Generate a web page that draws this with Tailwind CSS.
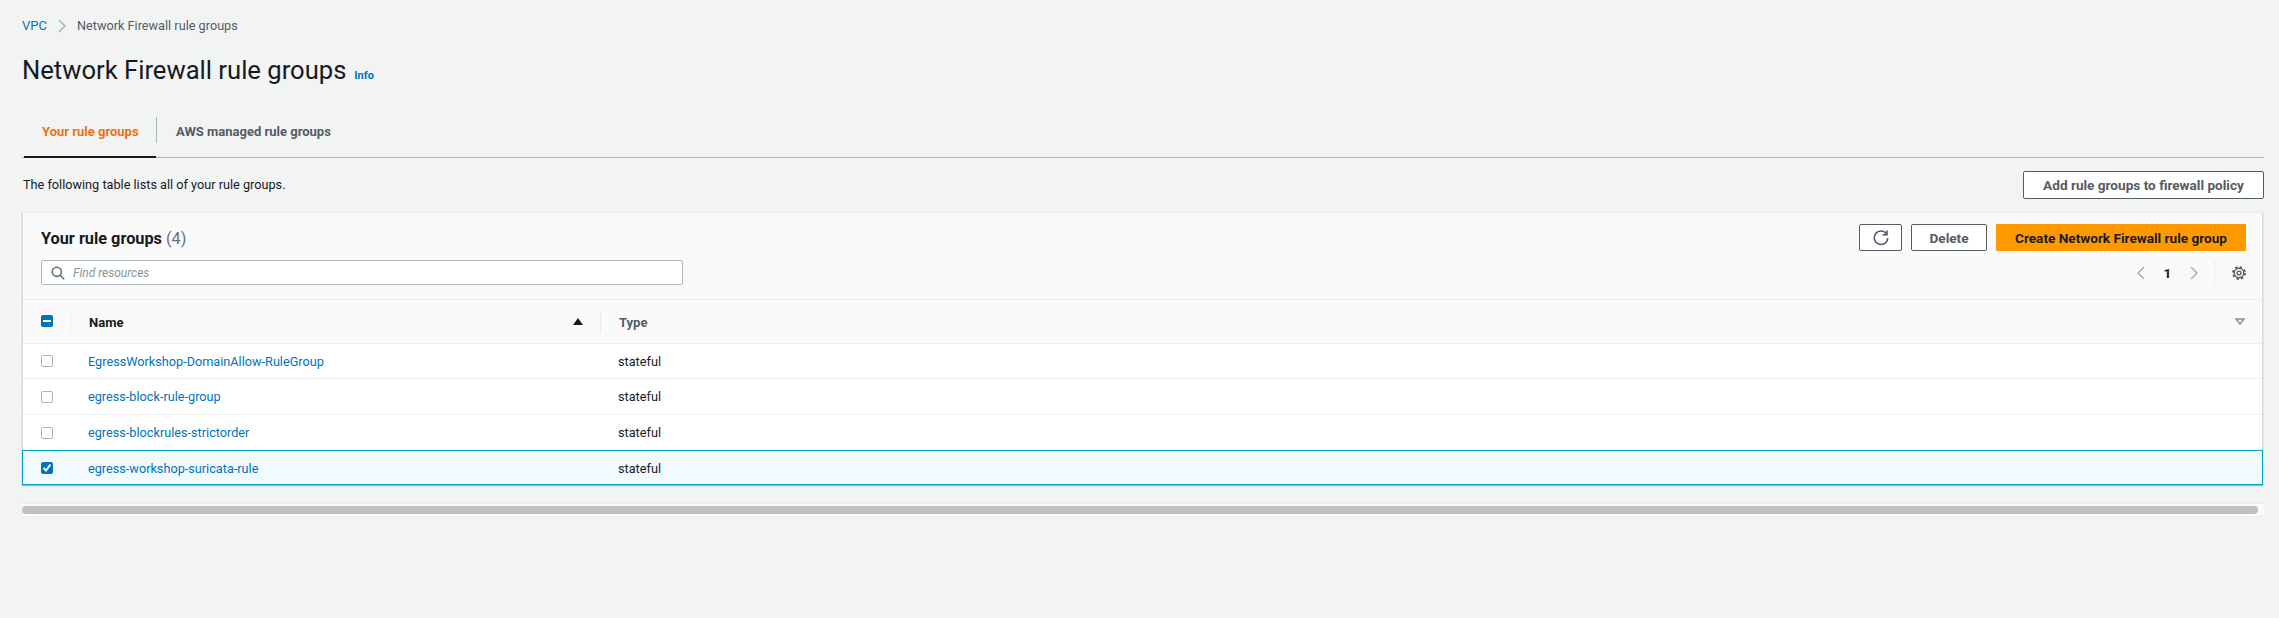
<!doctype html>
<html lang="en">
<head>
  <meta charset="UTF-8" />
  <script src="https://cdn.jsdelivr.net/npm/@tailwindcss/browser@4"></script>
  <title>Network Firewall rule groups</title>
</head>
<body class="h-[618px] w-[2279px] overflow-hidden bg-[#f2f3f3] pl-[22px] pr-[15px] font-['Roboto',sans-serif] text-[12.7px] leading-[18px] text-[#16191f]">
  <!-- Breadcrumb -->
  <nav class="flex h-[17px] items-center mt-[17px]">
    <a class="text-[#0073bb] text-[13px] w-[35px]">VPC</a>
    <svg class="w-[10px] h-[14px] text-[#aab7b8]" viewBox="0 0 10 14" fill="none" stroke="currentColor" stroke-width="1.6"><path d="M2 1l6 6-6 6"/></svg>
    <span class="ml-[10px] text-[#545b64]">Network Firewall rule groups</span>
  </nav>

  <header class="flex items-baseline mt-[17px] h-[38px]">
    <h1 class="text-[25.6px] leading-[38px] font-normal">Network Firewall rule groups</h1>
    <a class="ml-[8px] text-[11px] font-bold text-[#0073bb]">Info</a>
  </header>

  <!-- Tabs -->
  <div class="flex mt-[21px] h-[48px] border-b border-[#aab7b8]">
    <div class="relative flex w-[134px] items-center pl-[20px] pb-[3px] text-[13px] font-bold text-[#ec7211]">
      Your rule groups
      <div class="absolute left-[2px] right-0 bottom-[-1px] h-[2px] bg-[#16191f]"></div>
    </div>
    <div class="mt-[7px] h-[26px] w-px bg-[#aab7b8]"></div>
    <div class="flex items-center pl-[19px] pb-[3px] font-bold text-[13px] text-[#545b64]">AWS managed rule groups</div>
  </div>

  <div class="flex items-center justify-between mt-[13px] h-[28px]">
    <p class="pl-px">The following table lists all of your rule groups.</p>
    <button class="h-[28px] w-[241px] rounded-[2px] border border-[#545b64] bg-white text-[13.6px] font-bold text-[#545b64]">Add rule groups to firewall policy</button>
  </div>

  <!-- Table card -->
  <section class="mt-[13px] w-[2241px] border-l border-r border-[#d5dbdb] bg-white shadow-[0_1px_1px_0_rgba(0,28,36,0.3)]">
    <div class="h-[88px] border-t border-b border-[#eaeded] bg-[#fafafa] pl-[18px] pr-[16px]">
      <div class="flex items-start justify-between pt-[11px]">
        <h2 class="mt-[5px] text-[16.3px] leading-[20px] font-bold">Your rule groups <span class="font-normal text-[#687078]">(4)</span></h2>
        <div class="flex gap-[9px]">
          <button class="flex h-[27px] w-[43px] items-center justify-center rounded-[2px] border border-[#545b64] bg-white text-[#545b64]">
            <svg class="w-[16px] h-[16px]" viewBox="0 0 16 16" fill="none" stroke="currentColor" stroke-width="1.6"><path d="M13.4 3.800A6.700 6.700 0 1 0 14.700 8"/><path d="M9.500 4.800h4.500V.5"/></svg>
          </button>
          <button class="h-[27px] w-[76px] rounded-[2px] border border-[#545b64] bg-white text-[13.6px] font-bold text-[#545b64]">Delete</button>
          <button class="h-[27px] w-[250px] rounded-[1px] bg-[#ff9900] text-[13.6px] font-bold text-[#16191f]">Create Network Firewall rule group</button>
        </div>
      </div>
      <div class="flex items-start justify-between mt-[9px]">
        <div class="flex h-[25px] w-[642px] items-center rounded-[2px] border border-[#aab7b8] bg-white pl-[9px]">
          <svg class="w-[14px] h-[14px] text-[#687078]" viewBox="0 0 14 14" fill="none" stroke="currentColor" stroke-width="1.6"><circle cx="5.8" cy="5.8" r="4.6"/><path d="M9.2 9.2l4 4"/></svg>
          <span class="ml-[8px] text-[12px] italic text-[#879596]">Find resources</span>
        </div>
        <div class="flex h-[26px] items-center text-[#aab7b8]">
          <svg class="w-[10px] h-[14px]" viewBox="0 0 10 14" fill="none" stroke="currentColor" stroke-width="1.6"><path d="M8 1L2 7l6 6"/></svg>
          <span class="w-[43px] text-center text-[13.6px] font-bold text-[#16191f]">1</span>
          <svg class="w-[10px] h-[14px]" viewBox="0 0 10 14" fill="none" stroke="currentColor" stroke-width="1.6"><path d="M2 1l6 6-6 6"/></svg>
          <div class="ml-[15px] h-[26px] w-px bg-[#eaeded]"></div>
          <svg class="ml-[17px] w-[14px] h-[14px] text-[#545b64]" viewBox="0 0 16 16" fill="none" stroke="currentColor"><circle cx="8" cy="8" r="2.200" stroke-width="1.500"/><circle cx="8" cy="8" r="5.400" stroke-width="1.500"/><circle cx="8" cy="8" r="6.900" stroke-width="2" stroke-dasharray="2.800 2.620"/></svg>
        </div>
      </div>
    </div>

    <!-- Header row -->
    <div class="grid h-[44px] grid-cols-[48px_530px_1fr] items-center border-b border-[#eaeded] bg-[#fafafa] text-[13px] font-bold">
      <div class="flex h-[22px] items-center border-r border-[#eaeded] pl-[18px]">
        <span class="flex h-[12px] w-[12px] mb-[2px] items-center justify-center rounded-[2px] bg-[#0073bb]"><span class="h-[2px] w-[8px] bg-white"></span></span>
      </div>
      <div class="flex h-[22px] items-center justify-between border-r border-[#eaeded] pl-[18px] pr-[17px]">
        <span class="pt-[2px]">Name</span>
        <svg class="w-[10px] h-[7px] text-[#16191f]" viewBox="0 0 10 7" fill="currentColor"><path d="M5 0l5 7H0z"/></svg>
      </div>
      <div class="flex items-center justify-between pl-[18px] pr-[17px] text-[#545b64]">
        <span class="pt-[2px]">Type</span>
        <svg class="w-[10px] h-[7px] text-[#879596]" viewBox="0 0 10 7" fill="none" stroke="currentColor" stroke-width="1.5"><path d="M1 1h8L5 6z"/></svg>
      </div>
    </div>

    <!-- Rows -->
    <div class="grid h-[35px] grid-cols-[48px_530px_1fr] items-center border-b border-[#eaeded]">
      <div class="pl-[18px]"><span class="block h-[12px] w-[12px] rounded-[2px] border border-[#aab7b8] bg-white"></span></div>
      <a class="pl-[17px] pt-[2px] text-[#0073bb]">EgressWorkshop-DomainAllow-RuleGroup</a>
      <span class="pl-[17px] pt-[2px]">stateful</span>
    </div>
    <div class="grid h-[36px] grid-cols-[48px_530px_1fr] items-center border-b border-[#eaeded]">
      <div class="pl-[18px]"><span class="block h-[12px] w-[12px] rounded-[2px] border border-[#aab7b8] bg-white"></span></div>
      <a class="pl-[17px] text-[#0073bb]">egress-block-rule-group</a>
      <span class="pl-[17px]">stateful</span>
    </div>
    <div class="grid h-[35px] grid-cols-[48px_530px_1fr] items-center">
      <div class="pl-[18px]"><span class="block h-[12px] w-[12px] rounded-[2px] border border-[#aab7b8] bg-white"></span></div>
      <a class="pl-[17px] text-[#0073bb]">egress-blockrules-strictorder</a>
      <span class="pl-[17px]">stateful</span>
    </div>
    <div class="grid h-[35px] grid-cols-[48px_530px_1fr] items-center border border-[#00a1c9] bg-[#f1faff] -mx-px">
      <div class="pl-[18px]">
        <span class="flex h-[12px] w-[12px] items-center justify-center rounded-[2px] bg-[#0073bb]">
          <svg class="w-[10px] h-[10px] text-white" viewBox="0 0 10 10" fill="none" stroke="currentColor" stroke-width="2"><path d="M1.500 5l2.500 2.500 4.500-6"/></svg>
        </span>
      </div>
      <a class="pl-[17px] pt-[2px] text-[#0073bb]">egress-workshop-suricata-rule</a>
      <span class="pl-[17px] pt-[2px]">stateful</span>
    </div>
  </section>

  <!-- Scrollbar -->
  <div class="mt-[18px] flex h-[14px] w-[2242px] items-center border-t border-b border-[#eaeded] bg-[#fafafa]">
    <div class="h-[8px] w-[2236px] rounded-full bg-[#bfbfbf]"></div>
  </div>
</body>
</html>
